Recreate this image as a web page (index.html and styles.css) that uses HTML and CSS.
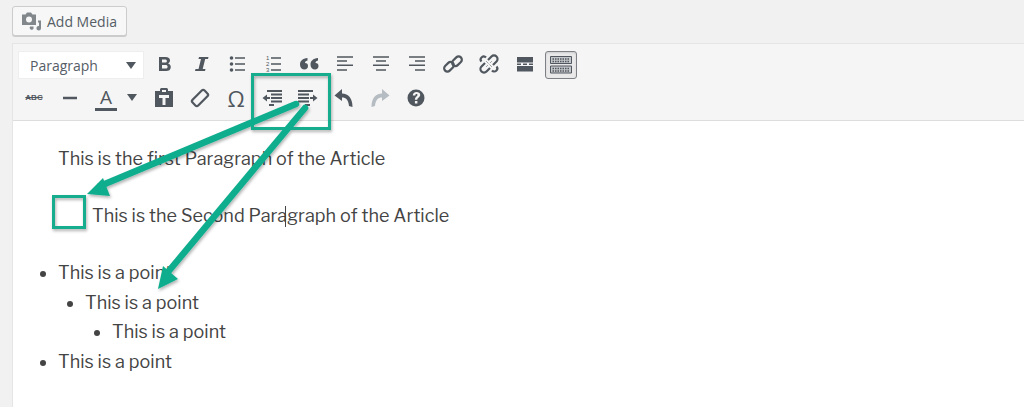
FILE: index.html
```html
<!DOCTYPE html>
<html lang="en">
<head>
<meta charset="utf-8">
<title>Editor</title>
<link rel="stylesheet" href="styles.css">
</head>
<body>
<div class="media-bar">
  <button class="add-media">
    <svg class="media-icon" width="21" height="19" viewBox="0 0 21 19"><path class="mi" fill-rule="evenodd" d="M1 2.500h3.500L6 .5h4l1.500 2H15v10.500H1zM8 4.500a3 3 0 1 0 0 6 3 3 0 0 0 0-6z"/><path class="mi" d="M12.500 8.500H20v7.800a2.300 2.300 0 1 1-2-2.300V10.500h-1v-2z"/><path class="mi" d="M9 14.500h3.500v2.300a2 2 0 1 1-3.500-2.300z"/></svg>
    <span>Add Media</span>
  </button>
</div>
<div class="editor">
  <div class="toolbar">
    <div class="row row-one">
      <div class="select"><span>Paragraph</span><i class="caret"></i></div>
      <span class="btn"><svg width="20" height="20" viewBox="0 0 20 20"><path class="f" d="M4 3h6.500c3 0 4.500 1.300 4.500 3.500 0 1.500-.8 2.500-2 2.900 1.600.4 2.800 1.600 2.800 3.500C15.800 15.800 13.800 17 11 17H4zm3 2.400v3.200h3c1.200 0 1.900-.6 1.900-1.600S11.200 5.400 10 5.400zm0 5.500v3.700h3.500c1.300 0 2.100-.7 2.100-1.900s-.8-1.800-2.100-1.800z"/></svg></span>
      <span class="btn"><svg width="20" height="20" viewBox="0 0 20 20"><path class="f" d="M8 3h9.500L17 5h-2.800L11.700 15h2.800l-.5 2H4l.5-2h3L10 5H7.500z"/></svg></span>
      <span class="btn"><svg width="20" height="20" viewBox="0 0 20 20"><circle class="f" cx="4.500" cy="4" r="1.800"/><circle class="f" cx="4.500" cy="10" r="1.800"/><circle class="f" cx="4.500" cy="16" r="1.800"/><path class="s1" d="M8 4h10M8 10h10M8 16h10"/></svg></span>
      <span class="btn"><svg width="20" height="20" viewBox="0 0 20 20"><path class="s1" d="M8 4h10M8 10h10M8 16h10"/><text class="num" x="3" y="6">1</text><text class="num" x="3" y="12">2</text><text class="num" x="3" y="18">3</text></svg></span>
      <span class="btn"><svg width="22" height="20" viewBox="0 0 22 20"><path class="f" d="M9.500 4v2.500C7.500 7 7 8 7 9c2 0 3 1.200 3 3 0 2-1.300 3.500-3.500 3.500C4 15.500 2 13.800 2 10.500 2 7 4.500 4.500 9.500 4zM20 4v2.500c-2 .5-2.500 1.500-2.500 2.500 2 0 3 1.200 3 3 0 2-1.300 3.500-3.500 3.500-2.500 0-4.500-1.700-4.500-5C12.500 7 15 4.500 20 4z"/></svg></span>
      <span class="btn"><svg width="20" height="20" viewBox="0 0 20 20"><path class="s1" d="M2 3h16M2 7h10M2 11.300h16M2 16h10"/></svg></span>
      <span class="btn"><svg width="20" height="20" viewBox="0 0 20 20"><path class="s1" d="M2 3h16M5 7h10M2 11.300h16M5 16h10"/></svg></span>
      <span class="btn"><svg width="20" height="20" viewBox="0 0 20 20"><path class="s1" d="M2 3h16M8 7h10M2 11.300h16M8 16h10"/></svg></span>
      <span class="btn"><svg width="22" height="22" viewBox="0 0 22 22"><rect class="l" x="1.500" y="10.500" width="11" height="6.500" rx="3.250" transform="rotate(-45 7 13.750)"/><rect class="l" x="9.500" y="5" width="11" height="6.500" rx="3.250" transform="rotate(-45 15 8.250)"/></svg></span>
      <span class="btn"><svg width="22" height="22" viewBox="0 0 22 22"><path class="l" d="M10 7L13.500 3.500a3.500 3.500 0 0 1 5 5L15 12M12 15L8.500 18.500a3.500 3.500 0 0 1-5-5L7 10M8 4.500a3 3 0 0 0-4.500 4M14 17.500a3 3 0 0 0 4.500-4"/><path class="ray" d="M8 8l2.500 2.500M14 14l-2.500-2.500M14 8l-2 2M8 14l2-2"/></svg></span>
      <span class="btn"><svg width="20" height="20" viewBox="0 0 20 20"><path class="f" d="M2 3h16v5.500H2zM2 12h16v5.500H2zM2 9.500h4v1.500H2zM8 9.500h4v1.500H8zM14 9.500h4v1.500h-4z"/></svg></span>
      <span class="btn btn-on"><svg width="24" height="20" viewBox="0 0 24 20"><path class="kb" d="M1.500 1.500h21v7h-21zM1.500 11h21v7h-21z"/><path class="dots" d="M3.500 4h17M3.500 6.500h17M3.500 13.500h17M3.500 16h17"/></svg></span>
    </div>
    <div class="row row-two">
      <span class="btn"><span class="abc">ABC</span></span>
      <span class="btn"><svg width="20" height="20" viewBox="0 0 20 20"><path class="hr" d="M3 10h14"/></svg></span>
      <span class="btn"><span class="a">A</span></span>
      <i class="caret small"></i>
      <span class="btn"><svg width="22" height="22" viewBox="0 0 22 22"><path class="f" fill-rule="evenodd" d="M2 4h5V2.500C7 1.500 8 1 8.500 1h5c.5 0 1.500.5 1.500 1.500V4h5v16H2zM9 3v2h4V3zM6 8v3h3.500v7h3v-7H16V8z"/></svg></span>
      <span class="btn"><svg width="22" height="22" viewBox="0 0 22 22"><rect class="l" x="2.500" y="7" width="17" height="8" rx="2" transform="rotate(-45 11 11)"/></svg></span>
      <span class="btn"><span class="omega">Ω</span></span>
      <span class="btn"><svg width="22" height="20" viewBox="0 0 22 20"><path class="s2" d="M6 3h15M10 6.500h11M10 10h11M10 13.500h11M8 17h5"/><path class="f" d="M6 6.500V9h3v2H6v2.500L1.500 10z"/></svg></span>
      <span class="btn"><svg width="22" height="20" viewBox="0 0 22 20"><path class="s2" d="M1 3h15M1 6.500h11M1 10h11M1 13.500h11M8 17h5"/><path class="f" d="M16 6.500V9h-3v2h3v2.500L20.500 10z"/></svg></span>
      <span class="btn"><svg width="22" height="22" viewBox="0 0 22 22"><path class="f" d="M9 2L1.500 8.500 9 14v-3.500c4 0 6.500 2.500 7 8.500l3.500 1c0-9-4-13-10.500-13.500z"/></svg></span>
      <span class="btn"><svg width="22" height="22" viewBox="0 0 22 22"><path class="g" d="M13 2l7.500 6.500L13 14v-3.500c-4 0-6.500 2.500-7 8.500l-3.500 1c0-9 4-13 10.500-13.500z"/></svg></span>
      <span class="btn"><svg width="20" height="20" viewBox="0 0 20 20"><path class="f" fill-rule="evenodd" d="M10 1.500a8.500 8.500 0 1 1 0 17 8.500 8.500 0 0 1 0-17zM6.800 7.500h2.500c.1-.9.500-1.400 1.200-1.400.6 0 1 .4 1 .9 0 1.100-2.600 1.800-2.600 4.800h2.400c0-2 2.900-2.400 2.900-5C14.200 5 12.500 4 10.500 4 8.300 4 6.900 5.400 6.800 7.500zM8.900 13v2.500h2.500V13z"/></svg></span>
    </div>
  </div>
  <div class="content">
    <p class="first">This is the first Paragraph of the Article</p>
    <p class="second">This is the Second Para<span class="cursor"></span>graph of the Article</p>
    <ul class="points">
      <li>This is a point
        <ul>
          <li>This is a point
            <ul><li>This is a point</li></ul>
          </li>
        </ul>
      </li>
      <li>This is a point</li>
    </ul>
  </div>
</div>
<svg class="marks" width="1024" height="407" viewBox="0 0 1024 407">
  <defs><filter id="sh" x="-10%" y="-10%" width="120%" height="120%"><feDropShadow dx="1" dy="2" stdDeviation="1.500" flood-color="#000" flood-opacity=".3"/></filter></defs>
  <g filter="url(#sh)">
    <rect class="mark-box" x="252.500" y="74.500" width="77" height="54"/>
    <rect class="mark-box" x="53.500" y="196.500" width="31" height="31"/>
    <path class="mark-line" d="M296 104L100 186"/>
    <path class="mark-head" d="M87 194L103 178L110 196z"/>
    <path class="mark-line" d="M305 108L168 272"/>
    <path class="mark-head" d="M158 289L163 266L178 279z"/>
  </g>
</svg>
</body>
</html>
```

FILE: styles.css
```css
* { box-sizing: border-box; }
html, body { margin: 0; height: 407px; overflow: hidden; }
body { background: #f1f1f1; position: relative; font-family: "Open Sans", "Liberation Sans", sans-serif; }
.media-bar { padding: 6px 0 7px 12px; height: 43px; }
.add-media {
  width: 115px; height: 30px; display: flex; align-items: center; gap: 5px;
  padding: 0 0 0 8px; background: #f7f7f7; border: 1px solid #cccccc; border-radius: 3px;
  box-shadow: 0 1px 0 #cccccc; color: #555d66; font: 14px "Open Sans", sans-serif;
}
.media-icon { flex: none; }
.mi { fill: #82878c; }
.editor { margin-left: 12px; height: 364px; background: #fff; border-left: 1px solid #e5e5e5; border-top: 1px solid #e5e5e5; }
.toolbar { height: 77px; background: #f5f5f5; border-bottom: 1px solid #dddddd; padding: 7px 0 0 5px; }
.row { display: flex; align-items: center; height: 33px; }
.row-one { height: 28px; margin-bottom: 2px; align-items: flex-start; }
.row-two { margin-left: -2px; }
.select {
  width: 126px; height: 28px; background: #fff; border: 1px solid #eeeeee; display: flex;
  align-items: center; justify-content: space-between; padding: 0 7px 0 11px; margin-right: 3px;
  font-size: 14px; color: #555d66;
}
.caret { width: 0; height: 0; border: 5px solid transparent; border-top: 7px solid #50575e; border-bottom: 0; }
.caret.small { margin: 0 9px 0 3px; flex: none; }
.btn { width: 36px; height: 26px; display: flex; align-items: center; justify-content: center; flex: none; }
.btn-on { width: 32px; height: 28px; margin-left: 2px; background: #e9e9e9; border: 1px solid #7d8186; border-radius: 3px; box-shadow: inset 0 1px 2px #ccc; }
.f { fill: #50575e; }
.g { fill: #b5bcc2; }
.s1 { stroke: #50575e; stroke-width: 1.500; fill: none; }
.s2 { stroke: #50575e; stroke-width: 1.800; fill: none; }
.hr { stroke: #50575e; stroke-width: 2.500; fill: none; }
.l { stroke: #50575e; stroke-width: 2.200; fill: none; }
.ray { stroke: #a0a5aa; stroke-width: 1; fill: none; }
.num { font: 6px "Liberation Sans", sans-serif; fill: #50575e; }
.kb { fill: #c4c7ca; stroke: #50575e; stroke-width: 1; }
.dots { stroke: #50575e; stroke-width: 1.500; stroke-dasharray: 1.500 1; fill: none; }
.abc { font: bold 8px/1 "Liberation Sans", sans-serif; color: #50575e; text-decoration: line-through; text-decoration-thickness: 1px; }
.a { width: 22px; text-align: center; font: 19px/22px "Open Sans", sans-serif; color: #50575e; border-bottom: 3px solid #50575e; margin-top: 2px; }
.omega { font: 500 22px/1 "Open Sans", sans-serif; color: #50575e; }
.content { padding: 23px 0 0 45px; color: #444444; font: 18px/29.700px "Libre Franklin", "Inter", "Liberation Sans", sans-serif; letter-spacing: .02px; }
.content p { margin: 0; }
.first { height: 57px; }
.second { padding-left: 34px; height: 57px; }
.cursor { display: inline-block; width: 1px; height: 21px; background: #444; vertical-align: -5px; margin: 0 1px 0 -2px; }
.points { margin: 0; padding: 0; list-style: disc; }
.points ul { padding: 0 0 0 27px; margin: 0; list-style: disc; }
.marks { position: absolute; left: 0; top: 0; pointer-events: none; }
.mark-box { fill: none; stroke: #14ad8f; stroke-width: 3; }
.mark-line { fill: none; stroke: #10ad8e; stroke-width: 6.500; stroke-linecap: round; }
.mark-head { fill: #10ad8e; }
```
